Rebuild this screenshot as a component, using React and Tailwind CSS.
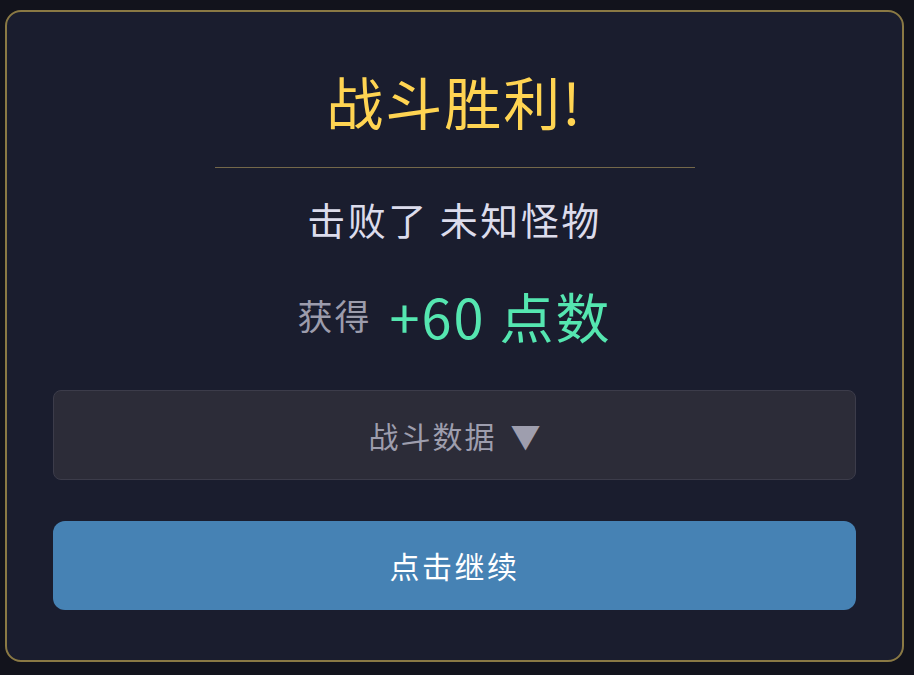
export default function App() {
  return (
    <div className="w-[914px] h-[675px] bg-[#12131c] pt-[10px] pl-[5px] overflow-hidden" style={{ fontFamily: '"Noto Sans CJK SC", "Noto Sans", sans-serif' }}>
      <div className="w-[899px] h-[652px] rounded-[16px] border-2 border-[#8a7944] bg-[#1a1d2e] flex flex-col items-center px-[46px] pt-[48px]">
        <div className="text-[57px] leading-[80px] text-[#ffd452] tracking-[2px]">战斗胜利!</div>
        <div className="w-[480px] h-px bg-[#74684a] mt-[27px]"></div>
        <div className="mt-[27px] text-[38px] leading-[48px] text-[#dcdcec] tracking-[2.5px]">击败了 未知怪物</div>
        <div className="mt-[40px] h-[64px] flex items-center gap-[18px]">
          <span className="text-[35px] text-[#9c9cac] tracking-[2px]">获得</span>
          <span className="text-[54px] text-[#55e6b0] tracking-[2px]">+60 点数</span>
        </div>
        <div className="mt-[43px] w-full h-[90px] rounded-[8px] border border-[#3c3c4a] bg-[#2c2c38] flex items-center justify-center gap-[14px] text-[30px] text-[#9e9eae]">
          <span className="tracking-[2px]">战斗数据</span>
          <span>▼</span>
        </div>
        <div className="mt-[41px] w-full h-[89px] rounded-[12px] bg-[#4682b4] flex items-center justify-center text-[30px] text-white tracking-[2.5px]">
          点击继续
        </div>
      </div>
    </div>
  );
}
